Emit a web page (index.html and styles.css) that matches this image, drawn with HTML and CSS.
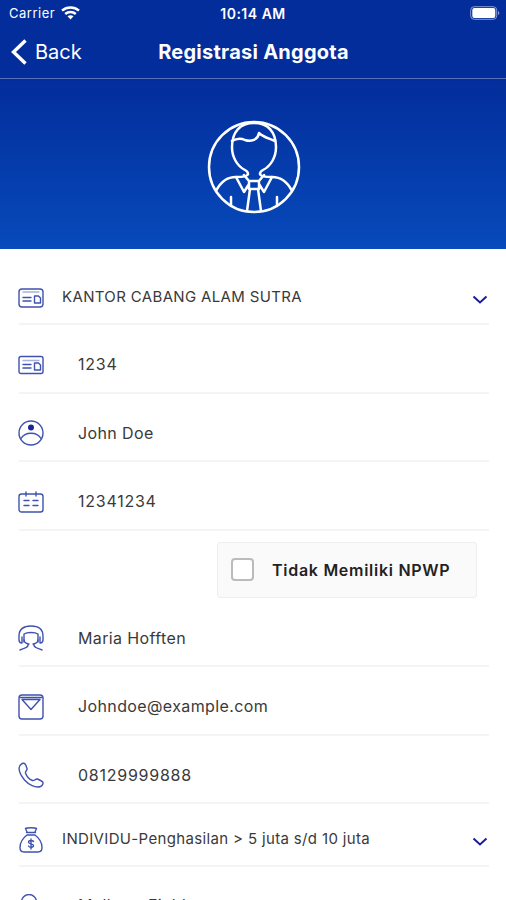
FILE: index.html
```html
<!DOCTYPE html>
<html lang="id">
<head>
    <meta charset="UTF-8">
    <title>Registrasi Anggota</title>
    <meta name="viewport" content="width=device-width, initial-scale=1.0">
    <link rel="stylesheet" href="styles.css">
</head>
<body>
    <div class="screen">
        <!-- Status bar -->
        <div class="status-bar">
            <div class="carrier">
                <span>Carrier</span>
                <svg width="19" height="14" viewBox="0 0 19 14" fill="none" stroke="#fff" stroke-width="2.5">
                    <path d="M1 4.6C5.8 .4 13.2 .4 18 4.6M4.2 8C7.2 5.3 11.8 5.3 14.8 8"/>
                    <path d="M6.5 10.3C8.3 8.8 10.7 8.8 12.5 10.3L9.5 13.5z" fill="#fff" stroke="none"/>
                </svg>
            </div>
            <span class="time">10:14 AM</span>
            <svg class="battery" width="30" height="14" viewBox="0 0 30 14">
                <rect x=".7" y=".7" width="26" height="12.6" rx="3.5" fill="none" stroke="#8b9bd4"/>
                <rect x="2.3" y="2" width="23" height="10" rx="2" fill="#fff"/>
                <path d="M28 5v4c1.8-.7 1.8-3.3 0-4z" fill="#8b9bd4"/>
            </svg>
        </div>

        <!-- Navigation -->
        <div class="nav-bar">
            <a class="back">
                <svg width="16" height="26" viewBox="0 0 16 26" fill="none" stroke="#fff" stroke-width="3.4">
                    <path d="M14.500 1.500L2.500 13l12 11.500"/>
                </svg>
                <span>Back</span>
            </a>
            <h1>Registrasi Anggota</h1>
        </div>

        <!-- Avatar -->
        <div class="banner">
            <svg width="94" height="94" viewBox="0 0 94 94" fill="none" stroke="#fff" stroke-width="2.500" stroke-linejoin="round" stroke-linecap="round">
                <circle cx="47" cy="47" r="45"/>
                <path d="M41 54c0-2-1-3-3-4C30 46 25 37 25 27 25 12 33 3 47 3s22 9 22 24c0 10-5 19-13 23-2 1-3 2-3 4"/>
                <path d="M25 21c5-3 9-3 13-1 6 2 13 0 14-7 4 4 9 5 16 8"/>
                <path d="M41 54c0 2-4 3-12 3-9 0-16 6-20 14M53 54c0 2 4 3 12 3 9 0 16 6 20 14"/>
                <path d="M29 57l8 15 5-8M65 57l-8 15-5-8M37 55l5 6h10l5-6M42 61v8h10v-8M43 69l-3 22M51 69l3 22M24 77v9M70 77v9"/>
            </svg>
        </div>

        <!-- Form -->
        <form class="form">
            <div class="field select first">
                <svg class="icon" viewBox="0 0 26 26">
                    <rect x="1" y="4" width="24" height="18" rx="3"/>
                    <path d="M5 7h16" class="light"/><path d="M5 12.500h8M5 16h8"/>
                    <path d="M16.500 11h4l2 2v5h-6z"/>
                </svg>
                <span class="value">KANTOR CABANG ALAM SUTRA</span>
                <svg class="chevron" viewBox="0 0 16 10"><path d="M1.500 1.500L8 7.500l6.500-6"/></svg>
            </div>
            <div class="field">
                <svg class="icon" viewBox="0 0 26 26">
                    <rect x="1" y="4.500" width="24" height="17" rx="2"/>
                    <path d="M5 8.500h16" class="light"/><path d="M5 12.500h8M5 16h8"/>
                    <path d="M16.500 11h4l2 2v5h-6z"/>
                </svg>
                <span class="value number">1234</span>
            </div>
            <div class="field">
                <svg class="icon" viewBox="0 0 26 26">
                    <circle cx="13" cy="13" r="12"/>
                    <circle cx="13" cy="7.500" r="3" class="dot"/>
                    <path d="M3 18.500c4-7 16-7 20 0"/>
                </svg>
                <span class="value">John Doe</span>
            </div>
            <div class="field">
                <svg class="icon" viewBox="0 0 26 26">
                    <rect x="1" y="5" width="24" height="18" rx="2.500"/>
                    <path d="M8 3v4M18 3v4M6 11.500h5M15 11.500h5M6 16.500h5M15 16.500h5"/>
                </svg>
                <span class="value number">12341234</span>
            </div>

            <label class="npwp">
                <input type="checkbox">
                <span>Tidak Memiliki NPWP</span>
            </label>

            <div class="field">
                <svg class="icon" viewBox="0 0 26 26">
                    <path d="M4 18c-2 0-3-1-3-3v-4C1 4 6 1 13 1s12 3 12 10v4c0 2-1 3-3 3M4 18V12M22 18V12M6 17V9c3-2 11-2 14 0v8"/>
                    <path d="M6 15c0 3 4 4 5 4M20 15c0 3-4 4-5 4M10 19c1 4-4 4-8 6M16 19c-1 4 4 4 8 6"/>
                </svg>
                <span class="value">Maria Hofften</span>
            </div>
            <div class="field">
                <svg class="icon" viewBox="0 0 26 26">
                    <rect x="1" y="1" width="24" height="24" rx="3"/>
                    <path d="M2 3.500h22M4 5.500h18l-9 10z"/>
                </svg>
                <span class="value">Johndoe@example.com</span>
            </div>
            <div class="field">
                <svg class="icon" viewBox="0 0 26 26">
                    <path d="M2 3.500c2-3 5-3 6 0l1 3c.7 2-2 2.500-1.500 4.500 1 3 4 6.500 7 7.500 2 .7 3-2 5-1.500l4 2c3 1.500 1 4.500-1 5.500-5 2-12-2-16-6.500C2.500 13-.5 7.500 2 3.500z"/>
                </svg>
                <span class="value number">08129999888</span>
            </div>
            <div class="field select">
                <svg class="icon" viewBox="0 0 26 26">
                    <path d="M9 5L7.500 1.500c2-1 9-1 11 0L17 5M8.500 5.500h9M9 8h8M9 8c-4 3-7 8-7 12.500C2 23.500 3 25 6 25h14c3 0 4-1.500 4-4.500C24 16 21 11 17 8"/>
                    <path d="M15.500 14.500c-1-1.500-5-1.500-5 .7 0 2 5 1.300 5 3.300 0 2.200-4 2.200-5 .5M13 12v10"/>
                </svg>
                <span class="value">INDIVIDU-Penghasilan &gt; 5 juta s/d 10 juta</span>
                <svg class="chevron" viewBox="0 0 16 10"><path d="M1.500 1.500L8 7.500l6.500-6"/></svg>
            </div>
            <div class="field last">
                <svg class="icon" viewBox="0 0 26 26">
                    <circle cx="11" cy="8" r="7.500"/>
                    <path d="M1 25c0-6 4-9 10-9s10 3 10 9"/>
                </svg>
                <span class="value">Mellows Field</span>
            </div>
        </form>
    </div>
</body>
</html>
```
FILE: styles.css
```css
body {
    margin: 0;
    font-family: Inter, "Liberation Sans", sans-serif;
    background: #fff;
}
.screen {
    width: 506px;
    height: 900px;
    overflow: hidden;
}

/* Header */
.status-bar {
    display: grid;
    grid-template-columns: 1fr auto 1fr;
    align-items: center;
    height: 26px;
    padding: 0 6px 0 6px;
    background: #032d9b;
    color: #fff;
    font-size: 13px;
}
.carrier {
    display: flex;
    align-items: center;
    gap: 6px;
    padding-left: 3px;
    letter-spacing: 0.5px;
}
.time {
    font-size: 14px;
    font-weight: 600;
    letter-spacing: 0.5px;
}
.battery {
    justify-self: end;
}
.nav-bar {
    display: grid;
    grid-template-columns: 1fr auto 1fr;
    align-items: center;
    height: 52px;
    padding: 0 10px 0 11px;
    background: #032d9b;
    border-bottom: 1px solid #5870b9;
    color: #fff;
}
.back {
    display: flex;
    align-items: center;
    gap: 8px;
    font-size: 20px;
}
h1 {
    margin: 0;
    font-size: 20px;
    font-weight: 700;
    letter-spacing: 0.25px;
}
.banner {
    display: flex;
    justify-content: center;
    align-items: center;
    box-sizing: border-box;
    height: 170px;
    padding: 6px 0 0 2px;
    background: linear-gradient(#032d9b, #074abb);
}

/* Form */
.form {
    padding: 0 17px 0 19px;
}
.field {
    display: flex;
    align-items: center;
    box-sizing: border-box;
    height: 68.5px;
    padding-top: 12px;
    border-bottom: 2px solid #f3f4f6;
    color: #3a3a3a;
    font-size: 16px;
    letter-spacing: 0.38px;
}
.field.select {
    height: 63px;
    padding-top: 8px;
    font-size: 15px;
    letter-spacing: 0.35px;
}
.field.first {
    height: 76px;
    padding-top: 21px;
}
.icon {
    flex: none;
    width: 26px;
    height: 26px;
    margin: 1px 34px 0 -1px;
    fill: none;
    stroke: #3f53ae;
    stroke-width: 1.4;
    stroke-linecap: round;
    stroke-linejoin: round;
}
.select .icon {
    margin-top: 3px;
    margin-right: 18px;
}
.icon .light {
    stroke: #a9b2dc;
}
.icon .dot {
    fill: #1b249b;
    stroke: none;
}
.value {
    flex: 1;
    white-space: nowrap;
}
.value.number {
    letter-spacing: 0.75px;
}
.last .value {
    margin-bottom: 3px;
}
.chevron {
    width: 16px;
    height: 10px;
    margin-top: 6px;
    margin-right: 1px;
    fill: none;
    stroke: #1c1c98;
    stroke-width: 2;
}

/* NPWP checkbox */
.npwp {
    display: flex;
    align-items: center;
    box-sizing: border-box;
    width: 260px;
    height: 56px;
    margin: 11px 12px 1px auto;
    padding-left: 13px;
    background: #fafafa;
    border: 1px solid #eee;
    border-radius: 3px;
    color: #222;
    font-size: 16px;
    font-weight: 600;
    letter-spacing: 0.72px;
}
.npwp input {
    appearance: none;
    box-sizing: border-box;
    width: 23px;
    height: 23px;
    margin: 0 18px 0 0;
    border: 2px solid #bbb;
    border-radius: 4px;
    background: #fff;
}
```
